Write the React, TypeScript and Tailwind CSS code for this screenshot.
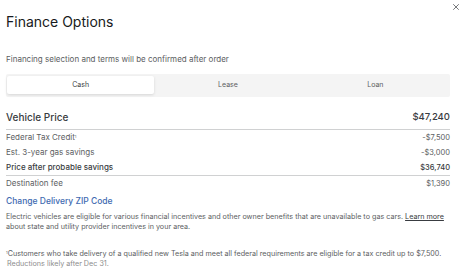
import { X } from "lucide-react";

const rows = [
  { label: "Federal Tax Credit", sup: "1", value: "-$7,500" },
  { label: "Est. 3-year gas savings", value: "-$3,000" },
  { label: "Price after probable savings", value: "$36,740", strong: true },
];

export default function App() {
  return (
    <div className="relative h-[272px] w-[467px] overflow-hidden bg-white px-[6px] font-['Inter',sans-serif] text-[#393c41]">
      <button className="absolute right-[6px] top-[2px] text-[#5c5e62]" aria-label="Close">
        <X size={10} strokeWidth={2} />
      </button>

      <div className="w-[444px]">
        <h1 className="pt-[13px] text-[14px] leading-[17px] text-[#171a20]">Finance Options</h1>

        <p className="mt-[24px] text-[8px] leading-[10px] text-[#5c5e62]">Financing selection and terms will be confirmed after order</p>

        <div className="mt-[10px] grid h-[23px] grid-cols-3 rounded-[2px] bg-[#f4f4f4] px-[1px] pb-[3px] pt-[2px] text-[7px] text-[#5c5e62]">
          <div className="flex items-center justify-center rounded-[2px] bg-white text-[#393c41] shadow-[0_1px_3px_rgba(0,0,0,0.12)]">Cash</div>
          <div className="flex items-center justify-center">Lease</div>
          <div className="flex items-center justify-center">Loan</div>
        </div>

        <div className="mt-[14px] flex justify-between border-b border-[#d0d1d2] pb-[6px] text-[10px] font-medium leading-[12px]">
          <span>Vehicle Price</span>
          <span className="text-[9.5px]">$47,240</span>
        </div>

        {rows.map((row) => (
          <div
            key={row.label}
            className={
              row.strong
                ? "flex justify-between border-b border-[#d0d1d2] text-[8px] font-medium leading-[15px] text-[#393c41]"
                : "flex justify-between text-[8px] leading-[15px] text-[#5c5e62]"
            }
          >
            <span>
              {row.label}
              {row.sup && <sup className="text-[4px]">{row.sup}</sup>}
            </span>
            <span className="text-[7.5px]">{row.value}</span>
          </div>
        ))}
        <div className="flex justify-between text-[8px] leading-[15px] text-[#5c5e62]">
          <span>Destination fee</span>
          <span className="text-[7.5px]">$1,390</span>
        </div>

        <a className="mt-[4px] block text-[8.5px] font-medium leading-[12px] text-[#3e6ab1]">Change Delivery ZIP Code</a>

        <p className="mt-[5px] text-[7.2px] leading-[10px] text-[#5c5e62]">
          Electric vehicles are eligible for various financial incentives and other owner benefits that are unavailable to gas cars.{" "}
          <span className="text-[#393c41] underline underline-offset-1">Learn more</span>
          <br />
          about state and utility provider incentives in your area.
        </p>

        <p className="mt-[17px] text-[7.2px] leading-[10px] text-[#5c5e62]">
          <sup className="text-[4px]">1</sup>Customers who take delivery of a qualified new Tesla and meet all federal requirements are eligible for a tax credit up to $7,500.
          <br />
          <span className="pl-[1px] text-[#8e8e8e]">Reductions likely after Dec 31.</span>
        </p>
      </div>
    </div>
  );
}
